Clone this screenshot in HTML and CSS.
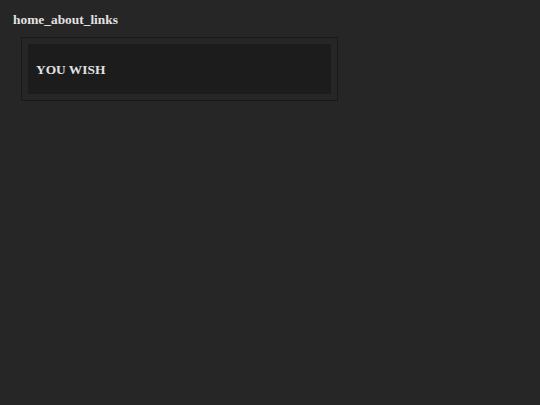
FILE: index.html
```html
<!DOCTYPE html>
<html>
<head>
<meta charset="utf-8">
<link rel="stylesheet" href="styles.css">
</head>
<body>
<div class="page">
  <h1 class="title">home_about_links</h1>
  <div class="frame">
    <div class="panel">
      <span class="panel-text">YOU WISH</span>
    </div>
  </div>
</div>
</body>
</html>
```
FILE: styles.css
```css
html, body {
  margin: 0;
  padding: 0;
  background: #262626;
}
.page {
  padding: 12px 13px;
  font-family: "Liberation Serif", "Times New Roman", serif;
}
.title {
  margin: 0;
  font-size: 13.4px;
  line-height: 16px;
  font-weight: bold;
  color: #e2e2e2;
}
.frame {
  margin: 9px 0 0 8px;
  width: 303px;
  padding: 6px;
  border: 1px solid #191919;
}
.panel {
  height: 50px;
  background: #1c1c1c;
  display: flex;
  align-items: center;
  padding-left: 8px;
  padding-top: 1px;
  box-sizing: border-box;
}
.panel-text {
  font-size: 13.4px;
  font-weight: bold;
  color: #e2e2e2;
}
```
